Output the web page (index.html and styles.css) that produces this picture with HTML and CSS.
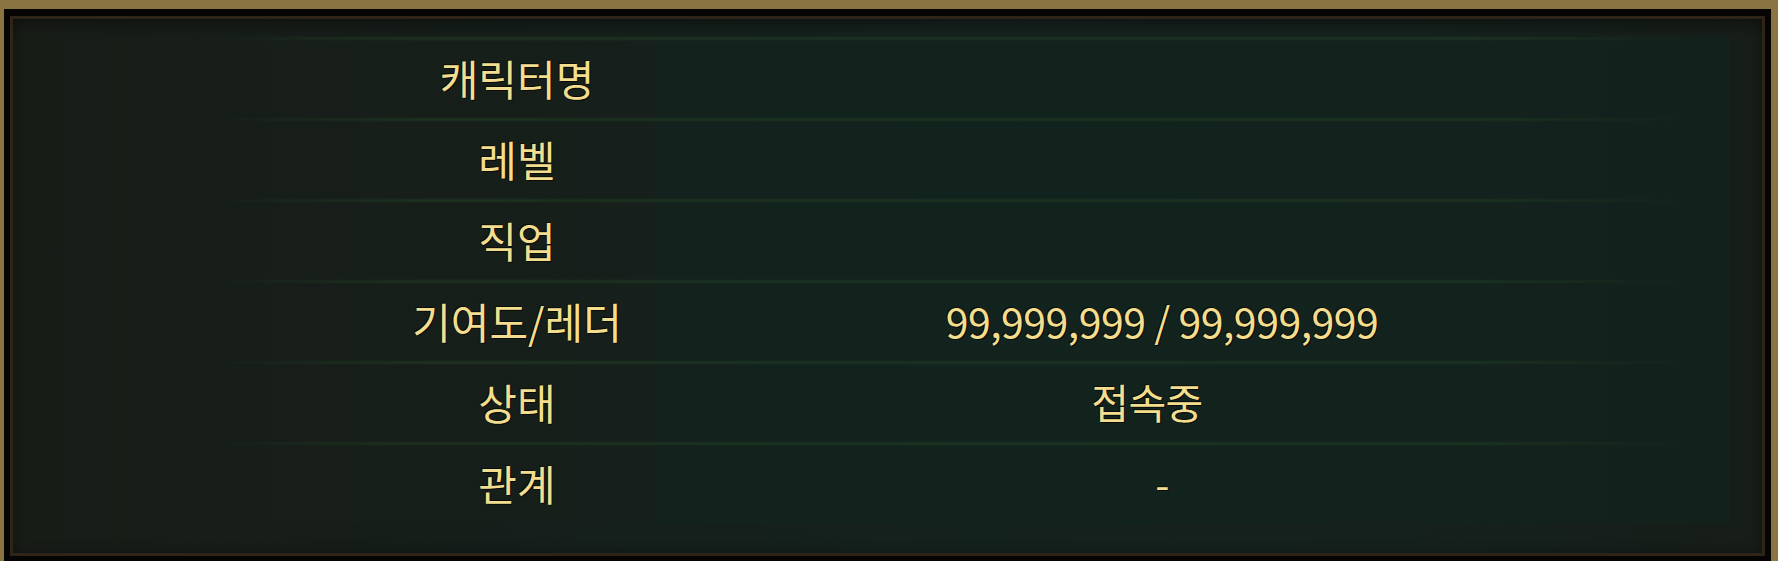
FILE: index.html
```html
<!DOCTYPE html>
<html>
<head>
    <title>캐릭터 정보</title>
    <link rel="stylesheet" href="styles.css">
</head>
<body>
    <div class="frame">
        <div class="frame-inner">
            <div class="panel">
                <div class="row">
                    <div class="label">캐릭터명</div>
                    <div class="value"></div>
                </div>
                <div class="row">
                    <div class="label">레벨</div>
                    <div class="value"></div>
                </div>
                <div class="row">
                    <div class="label">직업</div>
                    <div class="value"></div>
                </div>
                <div class="row">
                    <div class="label">기여도/레더</div>
                    <div class="value">99,999,999 / 99,999,999</div>
                </div>
                <div class="row">
                    <div class="label">상태</div>
                    <div class="value shift">접속중</div>
                </div>
                <div class="row">
                    <div class="label">관계</div>
                    <div class="value">-</div>
                </div>
            </div>
        </div>
    </div>
</body>
</html>
```

FILE: styles.css
```css
html, body {
    margin: 0;
    padding: 0;
}

body {
    width: 1778px;
    height: 561px;
    overflow: hidden;
    background-color: #0a0704;
    font-family: 'Noto Sans CJK KR', 'Noto Sans', sans-serif;
}

/* gold outer frame, bottom edge is cut off in the shot */
.frame {
    box-sizing: border-box;
    width: 1778px;
    height: 561px;
    border-style: solid;
    border-width: 9px 7px 0 4px;
    border-color: #8a7442;
    background-color: #0a0704;
}

.frame-inner {
    box-sizing: border-box;
    height: 100%;
    border-style: solid;
    border-width: 7px 6px 5px 6px;
    border-color: #070504;
}

.panel {
    box-sizing: border-box;
    height: 100%;
    border: 3px solid #2e2518;
    padding-top: 18px;
    background:
        linear-gradient(to bottom, rgba(10, 12, 10, 0.3), rgba(10, 12, 10, 0) 18px),
        linear-gradient(to right, #181c17 0%, #161e1a 25%, #14221e 55%, #15211d 80%, #171d19 100%);
    box-shadow: inset 0 0 12px rgba(0, 0, 0, 0.35);
}

.row {
    position: relative;
    display: grid;
    grid-template-columns: 500px 790px;
    padding-left: 254px;
    height: 81px;
    align-items: center;
    background: linear-gradient(to right,
        rgba(22, 30, 25, 0) 0,
        rgba(22, 30, 25, 0) 253px,
        rgba(24, 31, 27, 0.6) 253px,
        rgba(24, 31, 27, 0.6) 642px,
        rgba(18, 35, 30, 0.7) 642px,
        rgba(18, 35, 30, 0.7) 1717px,
        rgba(18, 35, 30, 0) 1717px);
}

/* faint green line at the top of each row */
.row::before {
    content: '';
    position: absolute;
    left: 180px;
    right: 60px;
    top: -1px;
    height: 5px;
    background: linear-gradient(to right,
        rgba(30, 56, 33, 0) 0,
        rgba(30, 56, 33, 0.75) 15%,
        rgba(30, 56, 33, 0.75) 85%,
        rgba(30, 56, 33, 0) 100%);
    -webkit-mask-image: linear-gradient(to bottom, transparent, #000 40%, #000 60%, transparent);
    mask-image: linear-gradient(to bottom, transparent, #000 40%, #000 60%, transparent);
}

.label,
.value {
    text-align: center;
    font-size: 42px;
    line-height: 81px;
    color: #f2de8e;
    text-shadow: 1px 1px 0 #0b0c06, -1px -1px 0 #0b0c06;
    white-space: nowrap;
}

.value {
    font-size: 41px;
    letter-spacing: -0.5px;
}

.shift {
    padding-right: 30px;
}
```
